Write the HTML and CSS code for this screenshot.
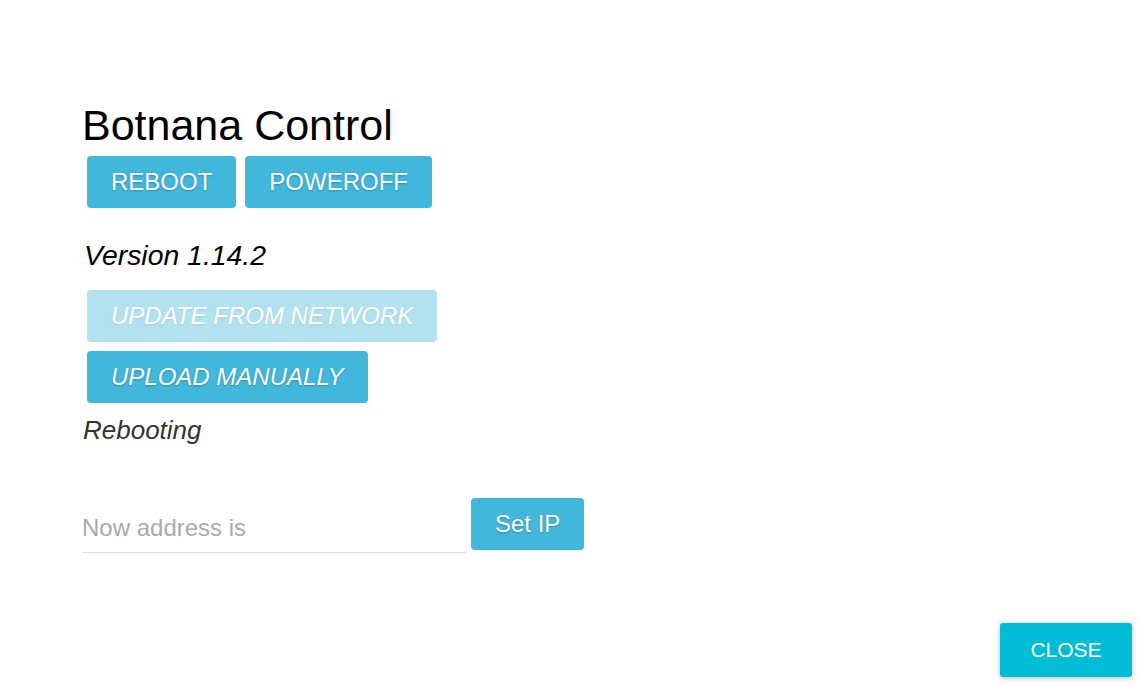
FILE: index.html
```html
<!DOCTYPE html>
<html>
<head>
<meta charset="utf-8">
<link rel="stylesheet" href="styles.css">
</head>
<body>
<div class="dialog">
  <div class="content">
    <h1 class="title">Botnana Control</h1>
    <div class="row">
      <button class="btn">REBOOT</button>
      <button class="btn">POWEROFF</button>
    </div>
    <p class="version">Version 1.14.2</p>
    <div class="stack">
      <button class="btn italic disabled">UPDATE FROM NETWORK</button>
      <button class="btn italic">UPLOAD MANUALLY</button>
    </div>
    <p class="status">Rebooting</p>
    <div class="ip-row">
      <input class="ip-input" type="text" placeholder="Now address is">
      <button class="btn btn-ip">Set IP</button>
    </div>
  </div>
  <div class="actions">
    <button class="close">CLOSE</button>
  </div>
</div>
</body>
</html>
```

FILE: styles.css
```css
html, body {
  margin: 0;
  padding: 0;
  background: #fff;
  font-family: "Liberation Sans", Arial, sans-serif;
}
.dialog {
  height: 686px;
  box-sizing: border-box;
  display: flex;
  flex-direction: column;
}
.content {
  flex: 1;
  padding: 99px 0 0 82px;
}
.title {
  margin: 0;
  font-size: 43px;
  font-weight: normal;
  line-height: 52px;
  color: #000;
}
.row {
  display: flex;
  gap: 9px;
  padding-left: 5px;
  margin-top: 5px;
}
.btn {
  height: 52px;
  padding: 0 24px;
  border: none;
  border-radius: 4px;
  background: #42b7dc;
  color: #fff;
  font-family: "Liberation Sans", Arial, sans-serif;
  font-size: 24px;
  text-shadow: 0 1px 2px rgba(0,0,0,0.25);
  cursor: pointer;
}
.italic { font-style: italic; }
.disabled { opacity: 0.4; }
.version {
  margin: 28px 0 0 2px;
  font-size: 28.4px;
  font-style: italic;
  line-height: 38px;
  color: #000;
}
.stack {
  display: flex;
  flex-direction: column;
  align-items: flex-start;
  gap: 9px;
  padding-left: 5px;
  margin-top: 16px;
}
.status {
  margin: 10px 0 0 1px;
  font-size: 26px;
  font-style: italic;
  line-height: 34px;
  color: #333;
}
.ip-row {
  display: flex;
  align-items: flex-start;
  gap: 5px;
  margin-top: 51px;
}
.ip-input {
  width: 384px;
  height: 48px;
  margin-top: 6px;
  padding: 0;
  border: none;
  border-bottom: 1px solid #ddd;
  font-family: "Liberation Sans", Arial, sans-serif;
  font-size: 24px;
  color: #333;
  outline: none;
  background: transparent;
}
.ip-input::placeholder { color: #aaa; }
.btn-ip { padding: 0 24px; }
.actions {
  display: flex;
  justify-content: flex-end;
  padding: 0 7px 9px 0;
}
.close {
  width: 132px;
  height: 54px;
  border: none;
  border-radius: 3px;
  background: #00bcd4;
  color: #fff;
  font-family: "Liberation Sans", Arial, sans-serif;
  font-size: 21px;
  box-shadow: 0 1px 6px rgba(0,0,0,0.16), 0 1px 4px rgba(0,0,0,0.12);
  cursor: pointer;
}
```
